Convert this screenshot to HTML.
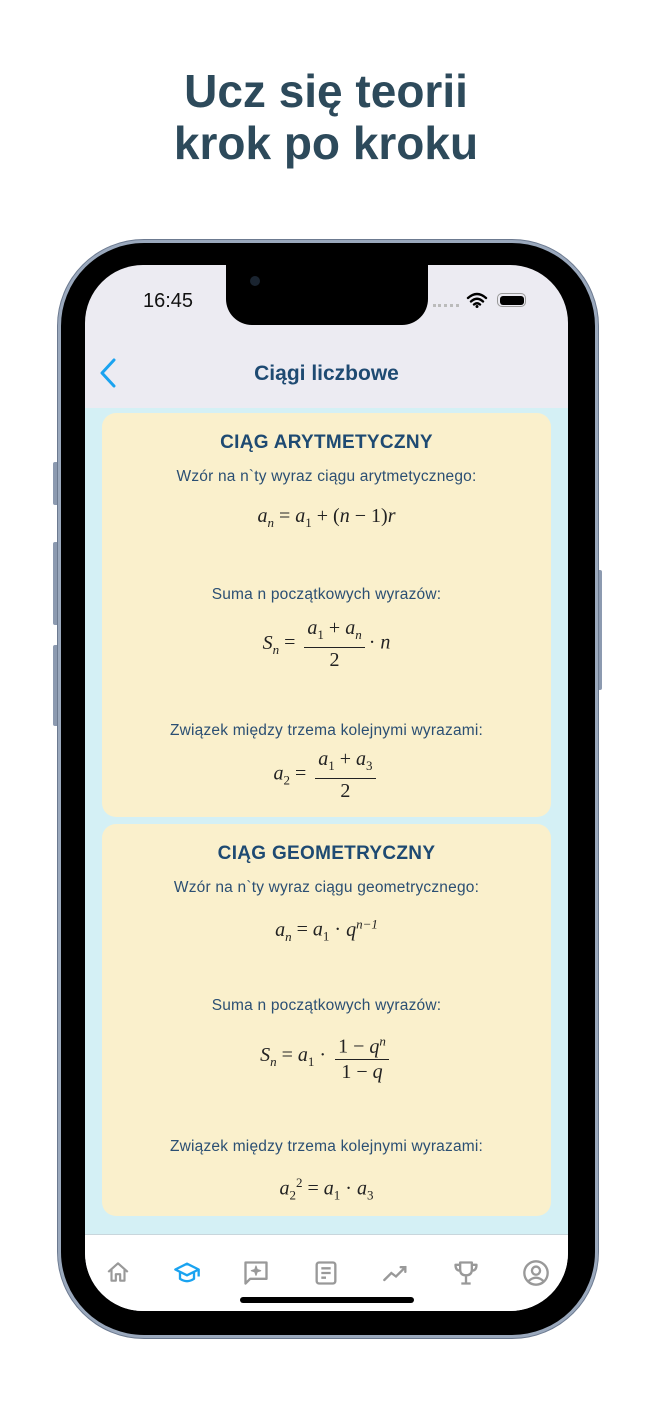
<!DOCTYPE html>
<html><head><meta charset="utf-8"><style>
*{margin:0;padding:0;box-sizing:border-box}
body{width:652px;height:1412px;background:#fff;position:relative;overflow:hidden;font-family:"Liberation Sans",sans-serif}
.abs{position:absolute}
h1{position:absolute;left:0;width:652px;text-align:center;top:65px;font-size:46px;line-height:52px;color:#2D4A5B;font-weight:bold}
.frame{left:58px;top:240px;width:540px;height:1098px;border-radius:86px;background:#000;border:3px solid #9AA8BC;box-shadow:0 0 0 1px #6c7a90}
.screen{left:85px;top:265px;width:483px;height:1046px;border-radius:58px;background:#ECEBF2;overflow:hidden}
.btn{background:#8C9AB0;border-radius:2px}
.c{position:absolute;left:0;width:100%;text-align:center}
.card{position:absolute;left:17px;width:449px;background:#FAF0CC;border-radius:14px}
.hd{font-weight:bold;font-size:19px;color:#1E4A72;letter-spacing:.3px}
.tx{font-size:15.5px;color:#2B4F73;letter-spacing:.2px}
.m{font-family:"Liberation Serif",serif;font-size:20px;color:#222}
.m i{font-style:italic}
sub,sup{font-size:13px}
.fr{display:inline-flex;flex-direction:column;vertical-align:middle;text-align:center;margin:0 4px}
.fr span:first-child{border-bottom:1.3px solid #222;padding:0 3px;line-height:24px}
.fr span:last-child{line-height:24px}
.tab svg{position:absolute;top:0}
</style></head><body>
<h1>Ucz się teorii<br>krok po kroku</h1>
<div class="abs btn" style="left:53px;top:462px;width:6px;height:43px"></div>
<div class="abs btn" style="left:53px;top:542px;width:6px;height:83px"></div>
<div class="abs btn" style="left:53px;top:645px;width:6px;height:81px"></div>
<div class="abs btn" style="left:596px;top:570px;width:6px;height:120px"></div>
<div class="abs frame"></div>
<div class="abs screen">
  <div class="abs" style="left:0;top:143px;width:483px;height:826px;background:#D4F0F5"></div>
  <div class="abs" style="left:0;top:969px;width:483px;height:77px;background:#fff;border-top:1px solid #c8d6dc"></div>
  <div class="abs" style="left:141px;top:-5px;width:202px;height:65px;background:#000;border-radius:0 0 26px 26px"></div>
  <div class="abs" style="left:165px;top:11px;width:10px;height:10px;border-radius:50%;background:#1a2430"></div>
  <div class="abs" style="left:58px;top:25px;font-size:20px;color:#111">16:45</div>
  <div class="abs" style="left:348px;top:39px;width:26px;height:3px;border-top:3px dotted #bbb"></div>
  <svg class="abs" style="left:381px;top:27px" width="22" height="16" viewBox="0 0 22 16"><path d="M2 6Q11-2 20 6M5 9.5Q11 4 17 9.5M8 12.5Q11 10 14 12.5" stroke="#000" stroke-width="2.4" fill="none" stroke-linecap="round"/><circle cx="11" cy="14.5" r="1.5"/></svg>
  <div class="abs" style="left:412px;top:28px;width:29px;height:14px;border:1.5px solid #999;border-radius:5px;padding:1.5px"><div style="width:100%;height:100%;background:#000;border-radius:3px"></div></div>
  <svg class="abs" style="left:13px;top:93px" width="20" height="30" viewBox="0 0 20 30"><path d="M16 2L4 15L16 28" stroke="#1AA3F0" stroke-width="3" fill="none" stroke-linecap="round" stroke-linejoin="round"/></svg>
  <div class="c" style="top:97px;font-size:21px;font-weight:bold;color:#1E4A72">Ciągi liczbowe</div>

  <div class="card" style="top:148px;height:404px">
    <div class="c hd" style="top:19px">CIĄG ARYTMETYCZNY</div>
    <div class="c tx" style="top:55px">Wzór na n`ty wyraz ciągu arytmetycznego:</div>
    <div class="c m" style="top:92px"><i>a<sub>n</sub></i> = <i>a</i><sub>1</sub> + (<i>n</i> − 1)<i>r</i></div>
    <div class="c tx" style="top:173px">Suma n początkowych wyrazów:</div>
    <div class="c m" style="top:203px"><i>S<sub>n</sub></i> = <span class="fr"><span><i>a</i><sub>1</sub> + <i>a<sub>n</sub></i></span><span>2</span></span>· <i>n</i></div>
    <div class="c tx" style="top:309px">Związek między trzema kolejnymi wyrazami:</div>
    <div class="c m" style="top:334px"><i>a</i><sub>2</sub> = <span class="fr"><span><i>a</i><sub>1</sub> + <i>a</i><sub>3</sub></span><span>2</span></span></div>
  </div>
  <div class="card" style="top:559px;height:392px">
    <div class="c hd" style="top:19px">CIĄG GEOMETRYCZNY</div>
    <div class="c tx" style="top:55px">Wzór na n`ty wyraz ciągu geometrycznego:</div>
    <div class="c m" style="top:92px"><i>a<sub>n</sub></i> = <i>a</i><sub>1</sub> · <i>q<sup>n−1</sup></i></div>
    <div class="c tx" style="top:173px">Suma n początkowych wyrazów:</div>
    <div class="c m" style="top:205px"><i>S<sub>n</sub></i> = <i>a</i><sub>1</sub> · <span class="fr"><span>1 − <i>q<sup>n</sup></i></span><span>1 − <i>q</i></span></span></div>
    <div class="c tx" style="top:314px">Związek między trzema kolejnymi wyrazami:</div>
    <div class="c m" style="top:351px"><i>a</i><sub>2</sub><sup>2</sup> = <i>a</i><sub>1</sub> · <i>a</i><sub>3</sub></div>
  </div>

  <div class="abs tab" style="left:0;top:994px;width:483px;height:30px">
    <svg style="left:20px" width="26" height="26" viewBox="0 0 24 24" fill="none" stroke="#999" stroke-width="2" stroke-linejoin="round"><path d="M3 12L12 4L21 12M6 10V20H10V14H14V20H18V10"/></svg>
    <svg style="left:88px" width="28" height="28" viewBox="0 0 24 24" fill="none" stroke="#1AA3F0" stroke-width="2" stroke-linejoin="round"><path d="M2 9L12 4L22 9L12 14Z M6 11V17Q12 21 18 17V11 M22 9V15"/></svg>
    <svg style="left:157px" width="28" height="28" viewBox="0 0 24 24" fill="none" stroke="#999" stroke-width="2" stroke-linejoin="round"><path d="M3 3H21V17H7L3 21Z"/><path d="M12 6L13 9L16 10L13 11L12 14L11 11L8 10L11 9Z" fill="#999" stroke-width="1"/></svg>
    <svg style="left:227px" width="28" height="28" viewBox="0 0 24 24" fill="none" stroke="#999" stroke-width="2"><rect x="4" y="3" width="16" height="18" rx="2"/><path d="M8 8H16M8 12H16M8 16H12"/></svg>
    <svg style="left:297px" width="28" height="28" viewBox="0 0 24 24" fill="none" stroke="#999" stroke-width="2" stroke-linecap="round"><path d="M2 18L8 12L12 15L20 7M16 7H20V11"/></svg>
    <svg style="left:367px" width="28" height="28" viewBox="0 0 24 24" fill="none" stroke="#999" stroke-width="2" stroke-linejoin="round"><path d="M7 3H17V9Q17 14 12 14Q7 14 7 9Z M7 5H3Q3 10 7 10M17 5H21Q21 10 17 10M12 14V20M8 21H16"/></svg>
    <svg style="left:437px" width="28" height="28" viewBox="0 0 24 24" fill="none" stroke="#999" stroke-width="2"><circle cx="12" cy="12" r="10"/><circle cx="12" cy="10" r="3.5"/><path d="M5.5 19Q12 13 18.5 19"/></svg>
  </div>
  <div class="abs" style="left:155px;top:1032px;width:174px;height:6px;border-radius:3px;background:#000"></div>
</div>
</body></html>
